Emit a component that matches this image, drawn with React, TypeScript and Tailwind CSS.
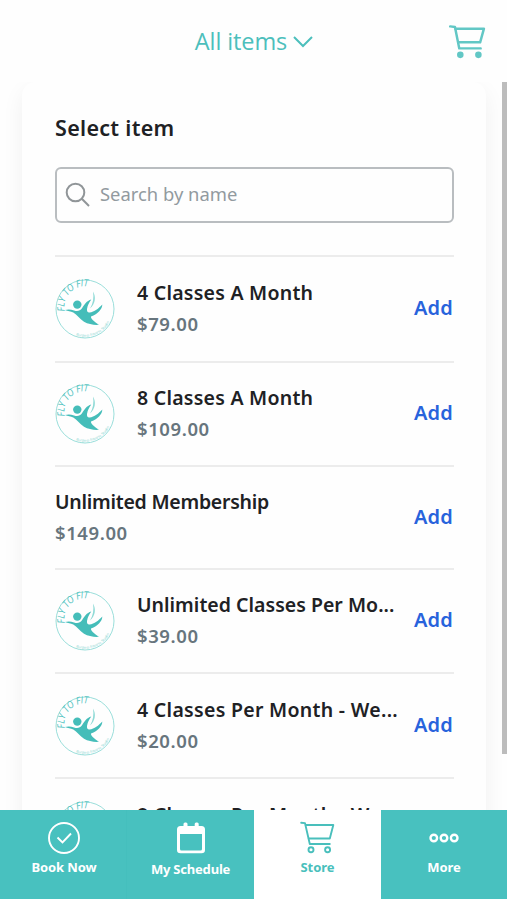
import { useState } from 'react'
import clsx from 'clsx'

interface StoreItem {
  id: string
  name: string
  price: string
  hasLogo: boolean
  rowClass: string
  nameClass: string
}

const items: StoreItem[] = [
  { id: 'm4', name: '4 Classes A Month', price: '$79.00', hasLogo: true, rowClass: 'h-[106px]', nameClass: 'tracking-[0.25px]' },
  { id: 'm8', name: '8 Classes A Month', price: '$109.00', hasLogo: true, rowClass: 'h-[104px]', nameClass: 'tracking-[0.25px]' },
  { id: 'um', name: 'Unlimited Membership', price: '$149.00', hasLogo: false, rowClass: 'h-[103px]', nameClass: 'tracking-[-0.25px]' },
  { id: 'uc', name: 'Unlimited Classes Per Mo...', price: '$39.00', hasLogo: true, rowClass: 'h-[104px]', nameClass: 'tracking-[0.02px]' },
  { id: 'w4', name: '4 Classes Per Month - We...', price: '$20.00', hasLogo: true, rowClass: 'h-[105px]', nameClass: 'tracking-[0.3px]' },
  { id: 'w8', name: '8 Classes Per Month - We...', price: '$40.00', hasLogo: true, rowClass: 'h-[105px]', nameClass: 'tracking-[0.3px]' },
]

const ClubLogo = () => (
  <svg viewBox="0 0 60 60" className="w-[60px] h-[60px] shrink-0 overflow-visible" fill="none">
    <defs>
      <path id="arc-top" d="M9.800 32 A20.300 20.300 0 0 1 48 19" />
      <path id="arc-bottom" d="M21 56.200 A27.700 27.700 0 0 0 57 36" />
    </defs>
    <circle cx="30" cy="30" r="29" stroke="#8fdad6" strokeWidth="0.9" />
    <text fill="#4fc2be" fontSize="10" fontStyle="italic" className="font-['Open_Sans',sans-serif]">
      <textPath href="#arc-top" textLength="39.500" lengthAdjust="spacingAndGlyphs">FLY TO FIT</textPath>
    </text>
    <text fill="#7fd3cf" fontSize="3.600" className="font-['Open_Sans',sans-serif]">
      <textPath href="#arc-bottom" textLength="39">Burgess Fitness Studio</textPath>
    </text>
    <circle cx="22.300" cy="25.600" r="4.200" fill="#45bdb9" />
    <path
      d="M10 31 C13 30 16 30.300 19 31.500 C22.500 32.600 25 32 27 29.300 C29.500 25.500 31.500 22 36.300 20.600 C34 23.500 32.700 26.500 32 30 C31.700 32 32.500 33.700 34.500 33.500 C39.500 33 43.500 29.500 47.300 25.500 C47.300 30 43 35 36 37.500 C35.500 39 38.500 42.500 44 45.800 C39 46.200 33.500 45.300 29 42.800 C25 40.300 22 35.500 18.300 33.500 C15.500 32.300 13 32.300 10 31Z"
      fill="#45bdb9"
    />
    <path d="M38 12.500 C41.300 18 40.300 25 35 29.500 C38.200 24.500 39 18.500 38 12.500Z" fill="#8fdad6" />
  </svg>
)

interface CartIconProps {
  className?: string
  filledWheels?: boolean
}

const CartIcon = ({ className, filledWheels }: CartIconProps) => (
  <svg viewBox="0 0 36 34" className={className} fill="none" stroke="currentColor" strokeLinecap="round" strokeLinejoin="round" strokeWidth={filledWheels ? 2.4 : 1.9}>
    <path d={filledWheels ? 'M1.200 2.300 L5.800 2.800 L10 23.700 H30.800' : 'M1.200 1.800 L5 2.100 L9.800 23 H29.800'} />
    <path d={filledWheels ? 'M6.300 4.500 H34 L30.300 17.800 H9' : 'M5.800 4 H33.300 L29.800 17.500 H8.800'} />
    <circle cx="11" cy={filledWheels ? 30 : 28.7} r={filledWheels ? 2 : 2.5} fill={filledWheels ? 'currentColor' : 'none'} />
    <circle cx={filledWheels ? 28.6 : 27.6} cy={filledWheels ? 30 : 28.7} r={filledWheels ? 2 : 2.5} fill={filledWheels ? 'currentColor' : 'none'} />
  </svg>
)

const SearchIcon = () => (
  <svg viewBox="0 0 26 26" className="w-[26px] h-[26px]" fill="none" stroke="#909598" strokeWidth="2">
    <circle cx="10.500" cy="10.500" r="8.800" />
    <path d="M16.800 16.800 L24 24" />
  </svg>
)

const CheckCircleIcon = () => (
  <svg viewBox="0 0 32 32" className="w-8 h-8" fill="none" stroke="currentColor" strokeWidth="1.900">
    <circle cx="16" cy="16" r="15" />
    <path d="M9.500 15.500 L14.500 20.500 L23 11.500" />
  </svg>
)

const CalendarIcon = () => (
  <svg viewBox="0 0 28 32" className="w-7 h-8" fill="currentColor">
    <path
      fillRule="evenodd"
      d="M3.500 4 H24.500 Q28 4 28 7.500 V28 Q28 31.300 24.500 31.300 H3.500 Q0 31.300 0 28 V7.500 Q0 4 3.500 4Z M3 12 V27 Q3 28.500 4.500 28.500 H23.500 Q25 28.500 25 27 V12Z"
    />
    <rect x="6.500" y="0.500" width="4" height="6" rx="1.500" />
    <rect x="17.700" y="0.500" width="4" height="6" rx="1.500" />
  </svg>
)

const MoreIcon = () => (
  <svg viewBox="0 0 30 10" className="w-[30px] h-[10px]" fill="none" stroke="currentColor" strokeWidth="2.400">
    <circle cx="4.800" cy="5" r="3.300" />
    <circle cx="15" cy="5" r="3.300" />
    <circle cx="25.200" cy="5" r="3.300" />
  </svg>
)

const tabs = [
  { label: 'Book Now', icon: <CheckCircleIcon />, tabClass: 'w-[127px] pl-[2px] pt-[12px] border-r border-[#45bfbd]', labelClass: 'mt-[3px] tracking-[-0.1px]' },
  { label: 'My Schedule', icon: <CalendarIcon />, tabClass: 'w-[127px] pt-[12px]', labelClass: 'mt-[5px] tracking-[-0.2px]' },
  { label: 'Store', icon: <CartIcon className="w-[36px] h-[34px]" />, tabClass: 'w-[127px] pt-[11px]', labelClass: 'mt-[2px]' },
  { label: 'More', icon: <MoreIcon />, tabClass: 'w-[126px] pt-[23px]', labelClass: 'mt-[14px]' },
]

const ItemRow = ({ item }: { item: StoreItem }) => (
  <li className={clsx('flex items-center border-t-2 border-[#ececec] shrink-0', item.rowClass)}>
    {item.hasLogo && (
      <div className="w-[82px] shrink-0">
        <ClubLogo />
      </div>
    )}
    <div className="flex-1 min-w-0 whitespace-nowrap pb-[2px]">
      <p className={clsx('text-[19.5px] leading-[31px] font-semibold text-[#202124]', item.nameClass)}>{item.name}</p>
      <p className="text-[18.5px] leading-[31px] font-semibold tracking-[0.6px] text-[#67757d]">{item.price}</p>
    </div>
    <button className="text-[20px] leading-6 pb-[2px] pr-px font-semibold tracking-[0.2px] text-[#2863dc]">Add</button>
  </li>
)

export default function App() {
  const [activeTab, setActiveTab] = useState('Store')

  return (
    <div className="w-[507px] h-[900px] flex flex-col overflow-hidden bg-[#fefefe] font-['Noto_Sans','Open_Sans',sans-serif]">
      <header className="h-[82px] shrink-0 grid grid-cols-[1fr_auto_1fr] items-center pr-[21px]">
        <span />
        <button className="flex items-center gap-[6px] pl-[22px] text-[#4cbfbc]">
          <span className="text-[23.5px] leading-8 font-normal tracking-[-0.1px] font-['Open_Sans',sans-serif]">All items</span>
          <svg viewBox="0 0 20 12" className="w-5 h-3 mt-[2px]" fill="none" stroke="currentColor" strokeWidth="2">
            <path d="M1 1 L10 10 L19 1" />
          </svg>
        </button>
        <CartIcon filledWheels className="w-[37px] h-[35px] justify-self-end text-[#62c7c5]" />
      </header>

      <main className="flex-1 min-h-0 flex overflow-hidden">
        <section className="ml-[22px] w-[464px] h-[800px] shrink-0 rounded-[14px] bg-[#fefefe] px-[33px] pt-[30px] shadow-[0_8px_22px_rgba(0,0,0,0.06)]">
          <h1 className="text-[21.5px] leading-8 font-semibold tracking-[0.3px] text-[#202124]">Select item</h1>
          <label className="mt-[23px] h-[56px] w-[399px] flex items-center gap-[9px] rounded-[6px] border-2 border-[#b9bdc0] pl-[8px]">
            <SearchIcon />
            <input
              placeholder="Search by name"
              className="flex-1 min-w-0 bg-transparent pb-[2px] text-[18.4px] outline-none placeholder:text-[#929a9f]"
            />
          </label>
          <ul className="mt-[32px] w-[399px] flex flex-col">
            {items.map(item => (
              <ItemRow key={item.id} item={item} />
            ))}
          </ul>
        </section>
        <div className="ml-auto w-[5px] h-[672px] shrink-0 bg-[#bcbcbc]" />
      </main>

      <nav className="flex h-[90px] shrink-0 border-b border-white">
        {tabs.map(tab => (
          <button
            key={tab.label}
            onClick={() => setActiveTab(tab.label)}
            className={clsx(
              'flex flex-col items-center',
              tab.tabClass,
              activeTab === tab.label ? 'bg-white text-[#49bfbc]' : 'bg-[#48c1bf] text-white',
            )}
          >
            {tab.icon}
            <span className={clsx('text-[13px] leading-5 font-bold', tab.labelClass)}>{tab.label}</span>
          </button>
        ))}
      </nav>
    </div>
  )
}
